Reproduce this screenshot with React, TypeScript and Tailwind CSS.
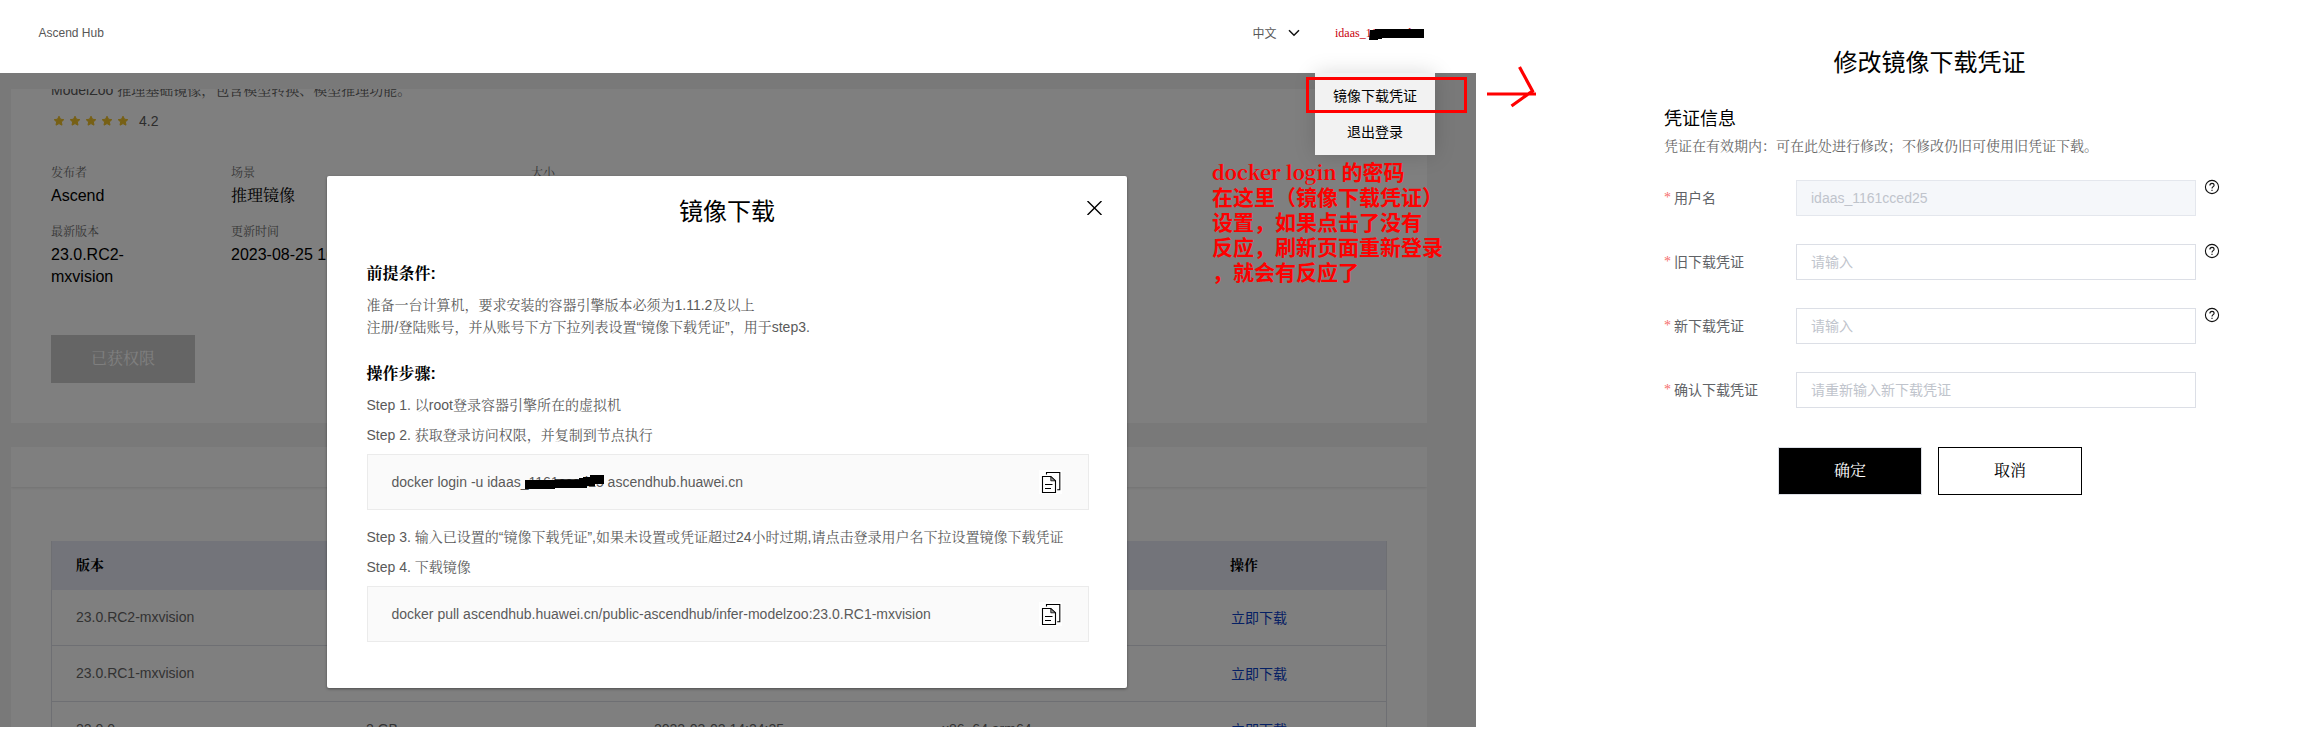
import React from "react";

const serifCjk = "font-['Liberation_Sans','Noto_Serif_CJK_SC','Noto_Sans_CJK_SC',sans-serif]";
const sansCjk = "font-['Liberation_Sans','Noto_Sans_CJK_SC',sans-serif]";

function Star() {
  return (
    <svg width="16" height="16" viewBox="0 0 16 16" fill="#eec02a" stroke="#eec02a" strokeLinejoin="round">
      <path d="M8 3.200l1.500 3 3.300.45-2.400 2.300.6 3.200L8 10.600l-3 1.550.6-3.200-2.400-2.300 3.300-.45z" />
    </svg>
  );
}

function Field({ label, value }: { label: string; value: string }) {
  return (
    <div>
      <div className="text-xs leading-[22px] text-[#6e6e6e]">{label}</div>
      <div className="mt-px whitespace-pre-line text-base leading-[22px] text-black">{value}</div>
    </div>
  );
}

function CopyIcon() {
  return (
    <svg width="23" height="24" viewBox="0 0 23 24" fill="none" className="bg-white" stroke="#000" strokeWidth="1.1">
      <path d="M3.500 6.500h8.300l4.700 4.200v11.800H3.500z" />
      <path d="M7.500 4.600V2.500h13.300v17.300h-2.600" />
      <path d="M11.800 6.600v4.200h4.600z" fill="#999" strokeWidth=".8" />
      <path d="M6 14.500h7.500M6 18.500h6" />
    </svg>
  );
}

function HelpIcon() {
  return (
    <svg width="16" height="16" viewBox="0 0 16 16" fill="none" stroke="#111" strokeWidth="1.1">
      <circle cx="8" cy="8" r="6.6" />
      <path d="M5.900 6.500c0-1.300.9-2.100 2.100-2.100s2.100.8 2.100 1.900c0 1.300-2.100 1.500-2.100 3.100" />
      <path d="M8 10.800v1.200" />
    </svg>
  );
}

function Row({ cells }: { cells: string[] }) {
  return (
    <div className="grid h-[56px] grid-cols-[290px_288px_288px_289px_1fr] items-center border-b border-[#dcdfe6] pb-[2px] pl-[24px] text-sm text-[#666]">
      {cells.map((c, i) => (
        <span key={i} className={i === 4 ? "font-['Noto_Sans_CJK_SC'] text-[#0b40c8]" : ""}>{c}</span>
      ))}
    </div>
  );
}

function Command({ children }: { children: React.ReactNode }) {
  return (
    <div className="ml-[0.5px] flex h-[56px] w-[722px] items-center justify-between border border-[#ebebeb] bg-[#fafafa] pl-[23.5px] pr-[26px]">
      {children}
      <CopyIcon />
    </div>
  );
}

function Modal() {
  return (
    <div className={"absolute left-[327px] top-[176px] flex h-[512px] w-[800px] flex-col rounded-[2px] bg-white px-[39.5px] pt-[18px] text-sm text-[#5a5a5a] shadow-[0_1px_3px_rgba(0,0,0,0.4)] " + serifCjk}>
      <h2 className="text-center font-['Noto_Sans_CJK_SC'] text-2xl leading-8 text-black">镜像下载</h2>
      <svg className="absolute left-[760px] top-[25px]" width="15" height="14" viewBox="0 0 15 14" stroke="#000" strokeWidth="1.4">
        <path d="M.5 0l14 14M14.500 0l-14 14" />
      </svg>
      <h3 className="mt-[37px] text-base font-bold leading-[22px] text-black">前提条件:</h3>
      <p className="mt-[9px] leading-[22px]">准备一台计算机，要求安装的容器引擎版本必须为1.11.2及以上<br />注册/登陆账号，并从账号下方下拉列表设置“镜像下载凭证”，用于step3.</p>
      <h3 className="mt-[25px] text-base font-bold leading-[22px] text-black">操作步骤:</h3>
      <p className="mt-[9px] leading-[22px]">Step 1. 以root登录容器引擎所在的虚拟机</p>
      <p className="mb-[8px] mt-[8px] leading-[22px]">Step 2. 获取登录访问权限，并复制到节点执行</p>
      <Command>
        <div className="relative">
          docker login -u idaas_1161cced25 ascendhub.huawei.cn
          <svg className="absolute left-[133.5px] top-[3px]" width="80" height="15" viewBox="0 0 80 15">
            <path d="M0 5h30v-.8h24V3h4V2h7V0h14v9h-9v2h-8v2H30v1H0z" />
          </svg>
        </div>
      </Command>
      <p className="mt-[16px] whitespace-nowrap leading-[22px]">Step 3. 输入已设置的“镜像下载凭证”,如果未设置或凭证超过24小时过期,请点击登录用户名下拉设置镜像下载凭证</p>
      <p className="mb-[8px] mt-[8px] leading-[22px]">Step 4. 下载镜像</p>
      <Command>docker pull ascendhub.huawei.cn/public-ascendhub/infer-modelzoo:23.0.RC1-mxvision</Command>
    </div>
  );
}

function HubPage() {
  return (
    <div className={"relative h-[727px] w-[1476px] overflow-hidden " + serifCjk}>
      <header className="flex h-[73px] items-center bg-white pb-[7px] pl-[38.5px] text-xs text-[#575757]">
        <span className="w-[1214px]">Ascend Hub</span>
        <span className="font-['Noto_Sans_CJK_SC']">中文</span>
        <svg className="ml-[11.5px]" width="12" height="8" viewBox="0 0 12 8" fill="none" stroke="#111" strokeWidth="1.5"><path d="M1 1.200l5 5 5-5" /></svg>
        <span className="relative ml-[35px] font-['Liberation_Serif'] text-[#c7000b]">
          idaas_1161cced25
          <svg className="absolute left-[34px] top-[4px]" width="56" height="12" viewBox="0 0 56 12"><path d="M1 1h5V0h49v9H13v1H9v1H0z" /></svg>
        </span>
      </header>
      <div className="flex h-[654px] flex-col bg-[#f2f2f2] pl-[11px] pr-[49px] pt-[16px]">
        <section className="flex h-[334px] shrink-0 flex-col overflow-hidden bg-white pl-[40px]">
          <p className="mt-[-10px] text-sm leading-[22px] text-[#5a5a5a]">ModelZoo 推理基础镜像，包含模型转换、模型推理功能。</p>
          <div className="mt-[9px] flex items-center text-sm leading-[22px] text-[#5a5a5a]">
            <Star /><Star /><Star /><Star /><Star /><span className="ml-[8px]">4.2</span>
          </div>
          <div className="mt-[30px] grid grid-cols-[180px_300px_1fr] gap-y-[14px]">
            <Field label="发布者" value="Ascend" />
            <Field label="场景" value="推理镜像" />
            <Field label="大小" value="2 GB" />
            <Field label="最新版本" value={"23.0.RC2-\nmxvision"} />
            <Field label="更新时间" value="2023-08-25 16:12:20" />
          </div>
          <button className="mt-[47px] h-[48px] w-[144px] shrink-0 bg-[#cacaca] text-base text-white">已获权限</button>
        </section>
        <section className="mt-[24px] h-[280px] overflow-hidden bg-white">
          <div className="h-[40px] shadow-[0_1px_3px_rgba(0,0,0,0.12)]" />
          <div className="ml-[40px] mt-[54px] w-[1336px] border-x border-[#dcdfe6]">
            <div className="grid h-[49px] grid-cols-[1154px_1fr] items-center bg-[#e6e9f5] pb-px pl-[24px] text-sm font-bold text-black">
              <span>版本</span><span>操作</span>
            </div>
            <Row cells={["23.0.RC2-mxvision", "", "", "", "立即下载"]} />
            <Row cells={["23.0.RC1-mxvision", "", "", "", "立即下载"]} />
            <Row cells={["22.0.0", "2 GB", "2022-03-02 14:24:25", "x86_64,arm64", "立即下载"]} />
          </div>
        </section>
      </div>
      <div className="absolute inset-x-0 bottom-0 top-[73px] bg-black/50" />
      <Modal />
      <div className="absolute left-[1315px] top-[73px] flex h-[82px] w-[120px] flex-col items-center gap-[14px] bg-[#f2f2f2] pt-[11px] font-['Noto_Sans_CJK_SC'] text-sm leading-[22px] text-black shadow-[0_0_20px_rgba(0,0,0,0.15)]">
        <span>镜像下载凭证</span>
        <span>退出登录</span>
      </div>
      <div className="absolute left-[1306px] top-[77px] h-[36px] w-[161px] border-[3px] border-[#f00]" />
      <p className="absolute left-[1212px] top-[159px] whitespace-pre font-['Noto_Sans_CJK_SC'] text-[21px] font-bold leading-[25px] text-[#f00]">
        <span className="font-['Noto_Serif_CJK_SC'] text-[19.5px] leading-none">docker login </span>
        {"的密码\n在这里（镜像下载凭证）\n设置，如果点击了没有\n反应，刷新页面重新登录\n，就会有反应了"}
      </p>
    </div>
  );
}

const rows = [
  { label: "用户名", text: "idaas_1161cced25", disabled: true, help: true },
  { label: "旧下载凭证", text: "请输入", disabled: false, help: true },
  { label: "新下载凭证", text: "请输入", disabled: false, help: true },
  { label: "确认下载凭证", text: "请重新输入新下载凭证", disabled: false, help: false },
];

function CredentialForm() {
  return (
    <div className={"w-[584px] pt-[47px] text-sm " + sansCjk}>
      <h2 className="w-[531px] text-center text-2xl leading-8 text-black">修改镜像下载凭证</h2>
      <h3 className="mt-[28px] text-lg leading-6 text-black">凭证信息</h3>
      <p className={"mt-[4px] leading-[22px] text-[#666] " + serifCjk}>凭证在有效期内：可在此处进行修改；不修改仍旧可使用旧凭证下载。</p>
      <div className="mt-[23px] flex flex-col gap-[28px]">
        {rows.map((r) => (
          <div key={r.label} className="flex h-[36px]">
            <div className="flex w-[132px] items-center text-[#606266]"><span className="mr-[3px] font-['Liberation_Serif'] text-[#f56c6c]">*</span>{r.label}</div>
            <div className={"flex w-[400px] items-center border pl-[14px] text-[#c0c4cc] " + (r.disabled ? "border-[#e4e7ed] bg-[#f5f7fa]" : "border-[#dcdfe6] bg-white")}>{r.text}</div>
            {r.help && <div className="ml-[8px] mt-[-1px]"><HelpIcon /></div>}
          </div>
        ))}
      </div>
      <div className={"ml-[114px] mt-[39px] flex gap-[16px] text-base " + serifCjk}>
        <button className="h-[48px] w-[144px] border border-[#dcdfe6] bg-black text-white">确定</button>
        <button className="h-[48px] w-[144px] border border-black bg-white text-black">取消</button>
      </div>
    </div>
  );
}

export default function App() {
  return (
    <div className="flex h-[734px] w-[2308px] overflow-hidden bg-white">
      <HubPage />
      <div className="w-[188px] pt-[62px]">
        <svg width="80" height="50" viewBox="0 0 80 50" fill="none" stroke="#f00" strokeWidth="3.2">
          <path d="M11 32h49M43.500 5l13 24-21 15" />
        </svg>
      </div>
      <CredentialForm />
    </div>
  );
}
